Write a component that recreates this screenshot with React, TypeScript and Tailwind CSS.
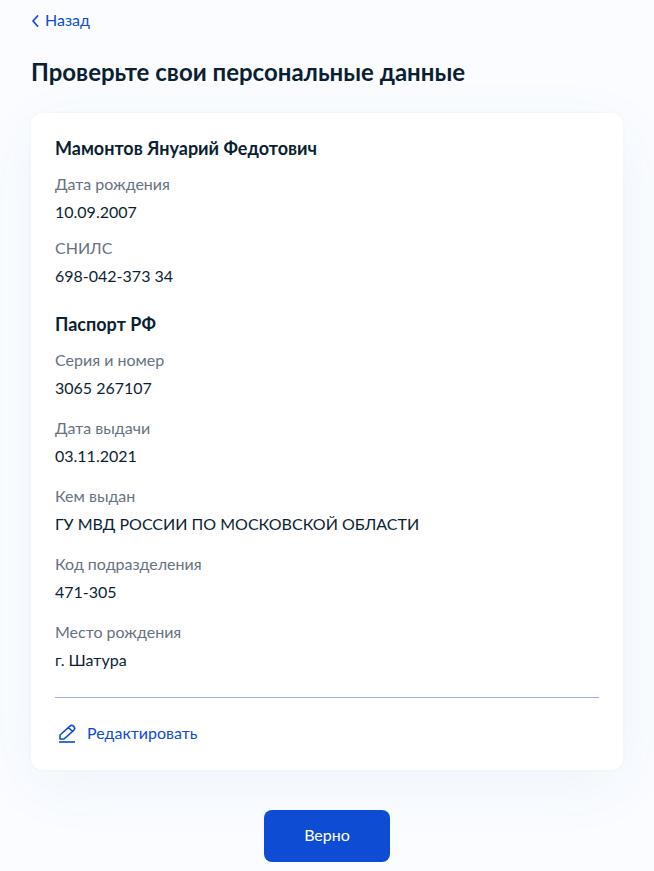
import React from 'react';

type Field = { label: string; value: string };

const person: Field[] = [
  { label: 'Дата рождения', value: '10.09.2007' },
  { label: 'СНИЛС', value: '698-042-373 34' },
];

const passport: Field[] = [
  { label: 'Серия и номер', value: '3065 267107' },
  { label: 'Дата выдачи', value: '03.11.2021' },
  { label: 'Кем выдан', value: 'ГУ МВД РОССИИ ПО МОСКОВСКОЙ ОБЛАСТИ' },
  { label: 'Код подразделения', value: '471-305' },
  { label: 'Место рождения', value: 'г. Шатура' },
];

const FieldRow = ({ label, value }: Field) => (
  <div>
    <dt className="text-[#66727f]">{label}</dt>
    <dd className="mt-1 text-[#0b1f33]">{value}</dd>
  </div>
);

export default function App() {
  return (
    <main className="min-h-screen bg-[#fafcff] px-[31px] pt-2 pb-2 font-['Lato',sans-serif] text-base leading-6 text-[#0b1f33]">
      <a href="#" className="inline-flex items-center gap-1 text-[#0d4cd3]">
        <svg width="10" height="14" viewBox="0 0 10 14" fill="none" stroke="currentColor" strokeWidth="1.8" strokeLinecap="round" strokeLinejoin="round">
          <path d="M6.500 3 2 8l4.500 5" />
        </svg>
        Назад
      </a>

      <h1 className="mt-[23px] text-2xl font-bold">Проверьте свои персональные данные</h1>

      <section className="mt-[25px] rounded-xl bg-white px-6 pt-[23px] pb-[25px] shadow-[0_0_4px_rgba(11,64,179,0.04),0_16px_64px_rgba(16,110,200,0.05)]">
        <h2 className="text-lg leading-6 font-bold">Мамонтов Януарий Федотович</h2>
        <dl className="mt-3 flex flex-col gap-3">
          {person.map((field) => (
            <FieldRow key={field.label} {...field} />
          ))}
        </dl>

        <h2 className="mt-6 text-lg leading-6 font-bold">Паспорт РФ</h2>
        <dl className="mt-3 flex flex-col gap-4">
          {passport.map((field) => (
            <FieldRow key={field.label} {...field} />
          ))}
        </dl>

        <hr className="mt-[25px] border-[#9db1e6]" />
        <button type="button" className="mt-[23px] flex items-center gap-2 text-[#0d4cd3]">
          <svg width="24" height="24" viewBox="0 0 24 24" fill="none" stroke="currentColor" strokeWidth="1.6" strokeLinejoin="round">
            <path d="M4 21h16" />
            <path d="M5 18v-4L14.700 5.300a2.700 2.700 0 0 1 4 4L9 18H5ZM13.500 6.500l3.800 3.800" />
          </svg>
          Редактировать
        </button>
      </section>

      <div className="mt-10 flex justify-center">
        <button type="button" className="rounded-lg bg-[#0d4cd3] px-10 pt-[13px] pb-[15px] text-white">
          Верно
        </button>
      </div>
    </main>
  );
}
